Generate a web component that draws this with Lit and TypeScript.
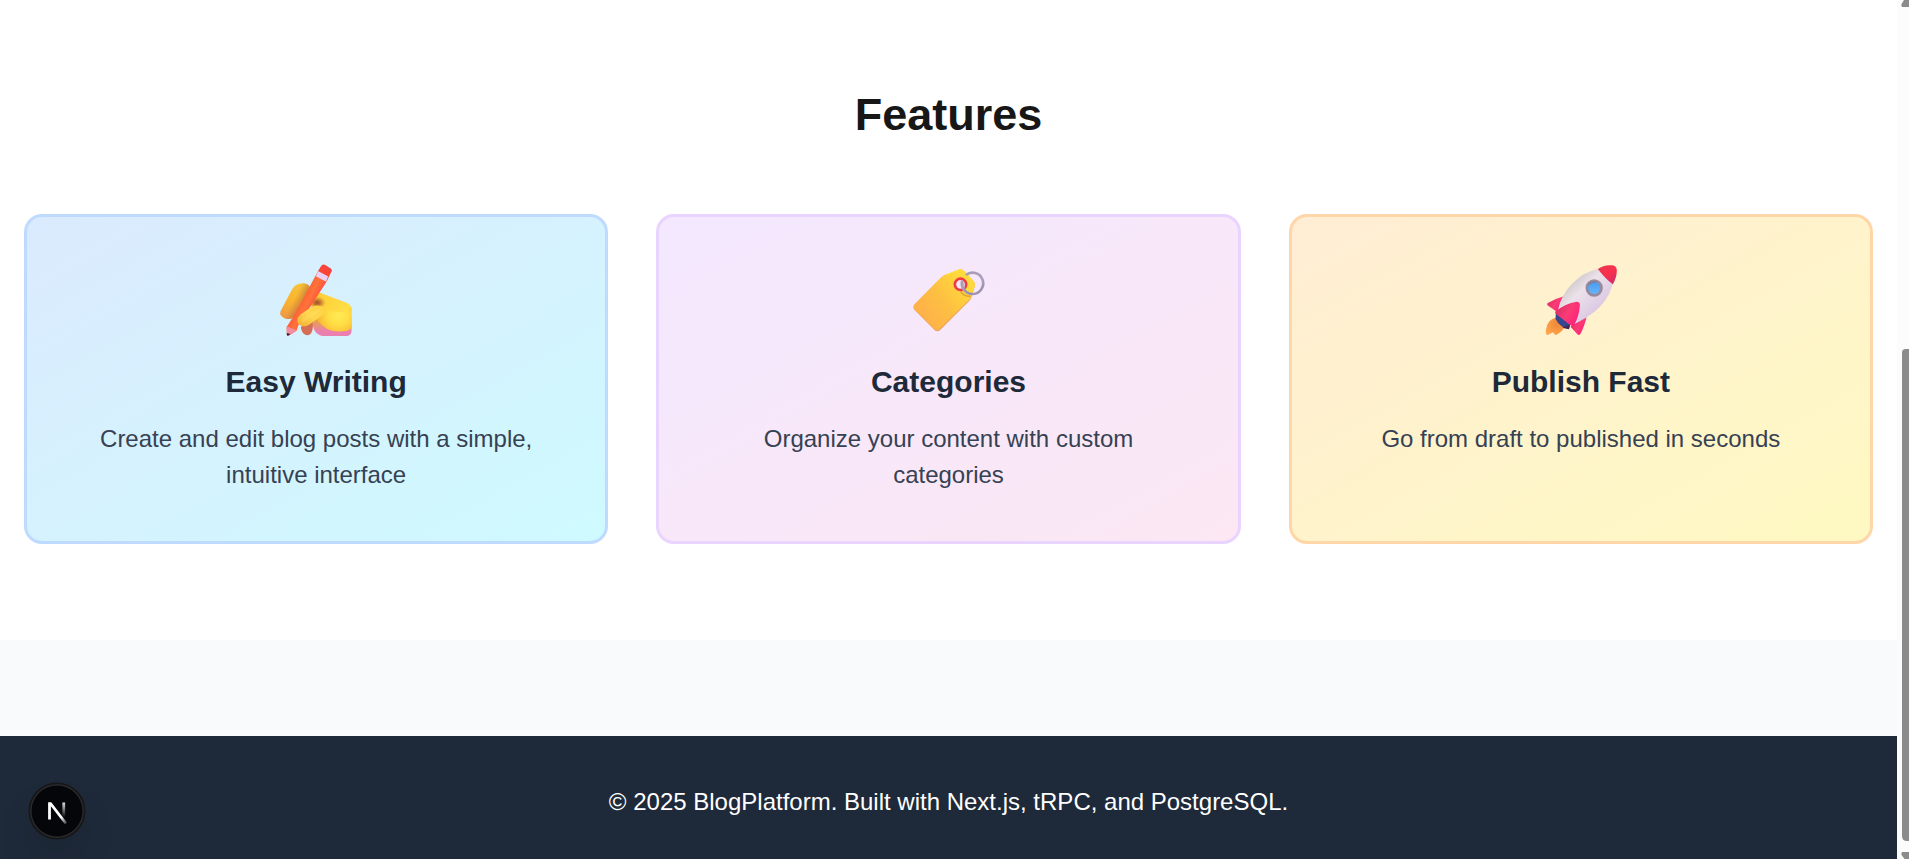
import { LitElement, html, css, svg } from "lit";
import { customElement, property } from "lit/decorators.js";

const writing = html`<svg viewBox="33.5 45 270 216" width="90" height="72" aria-hidden="true">
  <defs>
    <linearGradient id="finger" x1="0.65" y1="0" x2="0.35" y2="1"><stop offset="0" stop-color="#f6c238"/><stop offset="0.5" stop-color="#fbb530"/><stop offset="1" stop-color="#ee9b45"/></linearGradient>
    <linearGradient id="fingerShade" gradientUnits="userSpaceOnUse" x1="98" y1="155" x2="132" y2="172"><stop offset="0" stop-color="#b5663b" stop-opacity="0"/><stop offset="1" stop-color="#a95538"/></linearGradient>
    <linearGradient id="palm" x1="0" y1="0" x2="1" y2="0.6"><stop offset="0" stop-color="#f9c22f"/><stop offset="0.3" stop-color="#ffd138"/><stop offset="1" stop-color="#ffe04a"/></linearGradient>
    <radialGradient id="thumb" gradientUnits="userSpaceOnUse" cx="236" cy="196" r="62"><stop offset="0" stop-color="#ffeb55"/><stop offset="0.5" stop-color="#ffdd44"/><stop offset="1" stop-color="#f8b934"/></radialGradient>
    <linearGradient id="tip" x1="0" y1="1" x2="1" y2="0"><stop offset="0" stop-color="#f2ad31"/><stop offset="0.5" stop-color="#ffd650"/><stop offset="1" stop-color="#ffd23e"/></linearGradient>
    <linearGradient id="under" gradientUnits="userSpaceOnUse" x1="0" y1="205" x2="0" y2="254"><stop offset="0.2" stop-color="#e8a050"/><stop offset="0.8" stop-color="#eb7fb0"/></linearGradient>
    <linearGradient id="pencil" gradientUnits="userSpaceOnUse" x1="125" y1="145" x2="162" y2="164"><stop offset="0" stop-color="#ff5d38"/><stop offset="0.5" stop-color="#ff7438"/><stop offset="1" stop-color="#ff5540"/></linearGradient>
    <radialGradient id="crease" cx="0.5" cy="0.5" r="0.5"><stop offset="0" stop-color="#a34d2d"/><stop offset="0.4" stop-color="#b8652f" stop-opacity=".8"/><stop offset="1" stop-color="#d98a34" stop-opacity="0"/></radialGradient>
  </defs>
  <path d="M62 184 L96 119 Q109 98 132 100 Q156 103 153 130 L105 197 Q95 211 77 206 Q57 199 62 184Z" fill="url(#finger)"/>
  <path d="M62 184 L96 119 Q109 98 132 100 Q156 103 153 130 L105 197 Q95 211 77 206 Q57 199 62 184Z" fill="url(#fingerShade)" opacity=".75"/>
  <path d="M123 232 Q126 255 144 256 Q158 253 159 231 L160 208 L137 215Z" fill="#d66d55"/>
  <path d="M158 212 Q158 247 180 256 Q184 258 190 258 L262 258 Q274 257 275 244 L275 200 L190 190Z" fill="url(#under)"/>
  <path d="M169 124 L260 158 Q275 164 275 178 L275 225 L215 225 L180 212 L148 190Z" fill="url(#palm)"/>
  <ellipse cx="172" cy="158" rx="27" ry="20" fill="url(#crease)"/>
  <path d="M180 172 Q215 188 239 186 Q256 184 263 177 L275 172 L275 230 Q273 242 250 244 Q218 247 199 235 Q184 224 174 213 L170 200Z" fill="url(#thumb)"/>
  <path d="M187 45 Q192 42 198 46 L214 57 Q217 60 214 65 L202 92 L116 225 L110 242 Q97 252 84 257 Q80 258 81 249 L80 232 L105 193 L173 66Z" fill="url(#pencil)"/>
  <path d="M175 63 L205 78 L199 95 L168 79Z" fill="#e9d1f7"/>
  <path d="M184 48 Q189 42 196 46 L213 57 Q217 61 214 66 L207 80 L175 63Z" fill="#fb4539"/>
  <path d="M196 46 L213 57 Q217 61 214 66 L203 60Z" fill="#f0444a"/>
  <path d="M81 232 Q87 229 92 234 Q99 235 103 239 L112 239 Q104 248 85 257 Q81 258 81 251Z" fill="#f18fa0"/>
  <path d="M81 249 L92 252 L85 257 Q81 259 81 252Z" fill="#3d1d46"/>
  <path d="M112 211 Q112 202 124 192 L151 173 Q166 164 183 168 Q194 171 196 180 Q196 190 186 197 L150 223 Q136 234 120 226 Q112 220 112 211Z" fill="url(#tip)"/>
  <path d="M130 210 Q156 194 176 182" fill="none" stroke="#ffe16a" stroke-width="10" stroke-linecap="round" opacity=".4"/>
</svg>`;

const tag = html`<svg viewBox="7.5 43 270 216" width="90" height="72" aria-hidden="true">
  <defs>
    <linearGradient id="tagBody" x1="0.1" y1="0.8" x2="0.85" y2="0.25"><stop offset="0" stop-color="#ffb04b"/><stop offset="0.5" stop-color="#fdbf42"/><stop offset="1" stop-color="#ffd83c"/></linearGradient>
    <linearGradient id="ring" x1="0" y1="0" x2="1" y2="1"><stop offset="0" stop-color="#a99cae"/><stop offset="0.6" stop-color="#aaa0c0"/><stop offset="1" stop-color="#978da8"/></linearGradient>
  </defs>
  <path d="M42 162 L123 80 Q128 75 135 72 L174 57 Q184 54 191 61 L217 89 Q225 97 223 106 L213 139 Q212 146 206 151 L119 238 Q110 246 102 238 L43 179 Q35 171 42 162Z" fill="#f0a25f"/>
  <path d="M42 161 L123 79 Q128 75 135 72 L174 57 Q184 54 191 61 L217 89 Q225 97 223 106 L212 136 Q211 143 205 148 L117 235 Q110 241 102 235 L43 177 Q36 169 42 161Z" fill="url(#tagBody)"/>
  <path d="M138 72.5 L175 58.5 Q184 56 190 62 L215 89" fill="none" stroke="#ffe63b" stroke-width="3" stroke-linecap="round"/>
  <path d="M179 116 Q184 137 210 137" fill="none" stroke="#e0a536" stroke-width="5"/>
  <circle cx="180" cy="101" r="17" fill="#f5e7f5" stroke="#ee3b45" stroke-width="8"/>
  <path d="M182 88 Q197 96 191 113 Q183 116 181 106Z" fill="#d7c6dc"/>
  <path d="M196 73 A32 32 0 1 1 185 90 Q183 98 186 105" fill="none" stroke="url(#ring)" stroke-width="8"/>
  <path d="M190 116 Q200 130 216 130" fill="none" stroke="#8f85a0" stroke-width="3"/>
</svg>`;

const rocket = html`<svg viewBox="17.5 45 270 216" width="90" height="72" aria-hidden="true">
  <defs>
    <linearGradient id="hull" x1="0.25" y1="0.2" x2="0.75" y2="0.75"><stop offset="0" stop-color="#cfc8ca"/><stop offset="0.35" stop-color="#ece2ea"/><stop offset="0.7" stop-color="#e3d3e6"/><stop offset="1" stop-color="#d9c6e2"/></linearGradient>
    <linearGradient id="nose" x1="0.2" y1="0" x2="0.9" y2="0.9"><stop offset="0" stop-color="#e93750"/><stop offset="0.5" stop-color="#fa304f"/><stop offset="1" stop-color="#cf2e69"/></linearGradient>
    <linearGradient id="fin" x1="0" y1="0.2" x2="1" y2="0.8"><stop offset="0" stop-color="#d82c63"/><stop offset="0.5" stop-color="#fa3c75"/><stop offset="1" stop-color="#ff1c7c"/></linearGradient>
    <radialGradient id="flame" cx="0.6" cy="0.35" r="0.7"><stop offset="0" stop-color="#ef8738"/><stop offset="1" stop-color="#ffa54b"/></radialGradient>
    <linearGradient id="glass" x1="0" y1="0" x2="0" y2="1"><stop offset="0" stop-color="#4598ec"/><stop offset="1" stop-color="#69b9ff"/></linearGradient>
  </defs>
  <path d="M77 203 Q58 207 51 225 Q45 240 48 252 Q50 257 57 253 L68 247 L73 253 Q77 257 82 253 Q101 243 104 225Z" fill="url(#flame)"/>
  <path d="M77 190 L121 222 L117 236 Q91 235 76 207Z" fill="#38458f"/>
  <path d="M96 233 L119 224 L116 238Z" fill="#472557"/>
  <path d="M101 139 Q73 147 53 159 Q48 163 55 168 L78 184 L91 176Z" fill="url(#fin)"/>
  <path d="M169 202 Q162 232 151 251 Q147 258 141 252 L121 230 L140 212Z" fill="url(#fin)"/>
  <path d="M84 178 C94 132 122 100 157 75 Q178 62 204 56 Q234 70 248 103 C236 145 209 179 165 205 L127 226Z" fill="url(#hull)"/>
  <path d="M203 57 Q222 43 246 46 Q259 48 260 61 Q260 83 248 103 Q227 88 203 57Z" fill="url(#nose)"/>
  <circle cx="192" cy="114" r="22" fill="url(#glass)" stroke="#968a9e" stroke-width="8"/>
  <path d="M175 105 Q182 94 198 96" fill="none" stroke="#7d718a" stroke-width="3"/>
  <path d="M75 185 Q105 160 139 155 Q151 155 149 168 Q147 197 132 226 Q128 230 121 226 Q96 207 75 190Z" fill="url(#fin)"/>
</svg>`;

@customElement("feature-card")
export class FeatureCard extends LitElement {
  @property() heading = "";
  @property() text = "";
  @property({ reflect: true }) tone = "blue";
  @property({ attribute: false }) icon: unknown;

  static styles = css`
    :host {
      display: block;
      box-sizing: border-box;
      padding: 48px;
      border: 3px solid #bedbff;
      border-radius: 18px;
      background: linear-gradient(to bottom right in oklab, #dbeafe, #cefafe);
      text-align: center;
    }
    :host([tone="purple"]) {
      border-color: #e9d4ff;
      background: linear-gradient(to bottom right in oklab, #f3e8ff, #fce7f3);
    }
    :host([tone="orange"]) {
      border-color: #ffd6a7;
      background: linear-gradient(to bottom right in oklab, #ffedd4, #fef9c2);
    }
    .icon {
      display: flex;
      justify-content: center;
      height: 72px;
      margin-bottom: 24px;
    }
    .icon svg { display: block; overflow: visible; }
    .heading {
      margin: 0 0 18px;
      font-size: 30px;
      line-height: 42px;
      font-weight: 700;
      color: #1e2939;
    }
    .text {
      margin: 0;
      font-size: 24px;
      line-height: 36px;
      color: #364153;
    }
  `;

  render() {
    return html`
      <div class="icon">${this.icon}</div>
      <h3 class="heading">${this.heading}</h3>
      <p class="text">${this.text}</p>
    `;
  }
}

@customElement("app-root")
export class AppRoot extends LitElement {
  static styles = css`
    :host {
      display: flex;
      height: 859px;
      overflow: hidden;
      position: relative;
      background: #fff;
      font-family: "Liberation Sans", Arial, sans-serif;
    }
    .page { flex: 1; min-width: 0; }
    .features { padding: 88px 24px 96px; }
    .title {
      margin: 0 0 72px;
      font-size: 45px;
      line-height: 54px;
      font-weight: 700;
      text-align: center;
      color: #171717;
    }
    .cards {
      display: grid;
      grid-template-columns: repeat(3, 1fr);
      gap: 48px;
    }
    .spacer { height: 96px; background: #f9fafc; }
    .footer {
      padding: 48px 24px;
      background: #1e2939;
      color: #fff;
      font-size: 24px;
      line-height: 36px;
      text-align: center;
    }
    .footer p { margin: 0; }
    .scrollbar { flex: none; width: 12px; background: #fcfcfc; }
    .scrollbar svg { display: block; }
    .badge {
      position: absolute;
      left: 30px;
      bottom: 21px;
      width: 54px;
      height: 54px;
      border-radius: 50%;
      background: #05060a;
      box-shadow: 0 0 0 1.5px #171717, inset 0 0 0 1.5px #2b2b2d,
        0 24px 48px -12px rgba(0, 0, 0, 0.24);
    }
    .badge svg { display: block; }
  `;

  private cards = [
    { tone: "blue", icon: writing, heading: "Easy Writing", text: "Create and edit blog posts with a simple, intuitive interface" },
    { tone: "purple", icon: tag, heading: "Categories", text: "Organize your content with custom categories" },
    { tone: "orange", icon: rocket, heading: "Publish Fast", text: "Go from draft to published in seconds" },
  ];

  render() {
    return html`
      <main class="page">
        <section class="features">
          <h2 class="title">Features</h2>
          <div class="cards">
            ${this.cards.map(
              (c) => html`<feature-card .tone=${c.tone} .icon=${c.icon} .heading=${c.heading} .text=${c.text}></feature-card>`
            )}
          </div>
        </section>
        <div class="spacer"></div>
        <footer class="footer">
          <p>© 2025 BlogPlatform. Built with Next.js, tRPC, and PostgreSQL.</p>
        </footer>
      </main>
      <div class="scrollbar">
        <svg width="12" height="859" viewBox="0 0 12 859">
          ${svg`<g fill="#8b8b8b">
            <path d="M7 0 H12 V7 H5 Q4 6 4.5 4Z"/>
            <path d="M12 349 H8.5 Q5 349 5 352.5 V836 Q5 841 10 841 H12Z"/>
            <path d="M12 852 H5 Q4 853 4.5 855 L7.5 859 H12Z"/>
          </g>`}
        </svg>
      </div>
      <div class="badge">
        <svg width="54" height="54" viewBox="0 0 54 54">
          <defs>
            <linearGradient id="diag" gradientUnits="userSpaceOnUse" x1="9.95" y1="11.13" x2="15.36" y2="17.97">
              <stop stop-color="#fff"/><stop offset=".6" stop-color="#fff" stop-opacity=".25"/><stop offset="1" stop-color="#fff" stop-opacity="0"/>
            </linearGradient>
            <linearGradient id="stem" gradientUnits="userSpaceOnUse" x1="11.82" y1="1.4" x2="11.8" y2="11">
              <stop stop-color="#fff" stop-opacity=".85"/><stop offset="1" stop-color="#fff" stop-opacity="0"/>
            </linearGradient>
            <clipPath id="cap"><rect x="0" y="1" width="20" height="20"/></clipPath>
          </defs>
          <g transform="translate(16 16.7) scale(1.5)" fill="none" stroke-width="1.86">
            <path d="M13.3 15.2 L2.34 1 V12.6" stroke="url(#diag)" clip-path="url(#cap)"/>
            <rect x="10.9" y="1.2" width="1.86" height="11.9" fill="url(#stem)" stroke="none"/>
          </g>
        </svg>
      </div>
    `;
  }
}
